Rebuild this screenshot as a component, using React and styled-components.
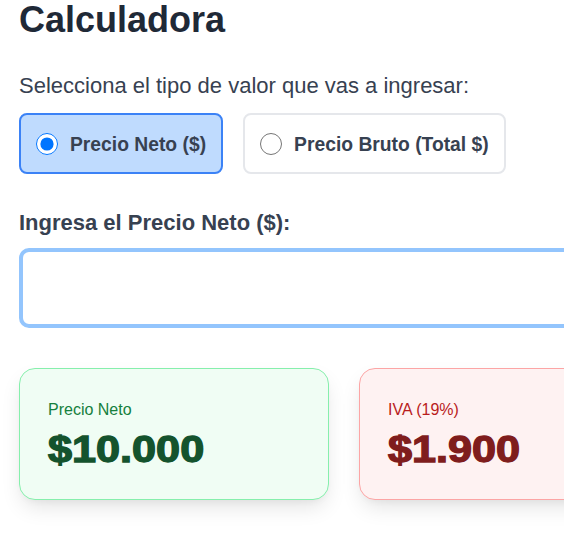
import React, { useState } from "react";
import styled, { createGlobalStyle } from "styled-components";

const Global = createGlobalStyle`
  html { overflow: hidden; }
  html, body { margin: 0; padding: 0; background: #ffffff; }
  body { font-family: "Liberation Sans", Arial, sans-serif; }
  * { box-sizing: border-box; }
`;

const Page = styled.div`
  width: 990px;
  margin-left: 19px;
  padding-bottom: 40px;
  display: flex;
  flex-direction: column;
`;

const Title = styled.h1`
  margin: 0;
  font-size: 36px;
  line-height: 40px;
  font-weight: 700;
  color: #1f2937;
`;

const Prompt = styled.p`
  margin: 32px 0 0;
  font-size: 22px;
  line-height: 28px;
  color: #374151;
`;

const OptionRow = styled.div`
  margin-top: 13px;
  display: flex;
  gap: 20px;
`;

const Option = styled.label`
  display: flex;
  align-items: center;
  gap: 12px;
  height: 61px;
  padding: 0 15px;
  border-radius: 8px;
  border: 2px solid ${(p) => (p.$active ? "#3b82f6" : "#e5e7eb")};
  background: ${(p) => (p.$active ? "#bfdbfe" : "#ffffff")};
  cursor: pointer;
`;

const Radio = styled.input`
  width: 22px;
  height: 22px;
  margin: 0;
`;

const OptionText = styled.span`
  font-size: 19.3px;
  font-weight: 700;
  color: #374151;
  padding-top: 2px;
`;

const FieldLabel = styled.label`
  margin-top: 35px;
  font-size: 22px;
  line-height: 28px;
  font-weight: 700;
  color: #374151;
`;

const Input = styled.input`
  margin-top: 11px;
  width: 100%;
  height: 80px;
  border: 4px solid #93c5fd;
  border-radius: 10px;
  background: #ffffff;
  outline: none;
  padding: 0 16px;
  font-size: 24px;
  font-family: inherit;
`;

const Cards = styled.div`
  margin-top: 40px;
  display: grid;
  grid-template-columns: repeat(3, 310px);
  gap: 30px;
`;

const tones = {
  green: { bg: "#f0fdf4", border: "#86efac", label: "#15803d", value: "#14532d" },
  red: { bg: "#fef2f2", border: "#fca5a5", label: "#b91c1c", value: "#7f1d1d" },
};

const Card = styled.div`
  height: 132px;
  padding: 29px 28px 0;
  border-radius: 16px;
  border: 1px solid ${(p) => tones[p.$tone].border};
  background: ${(p) => tones[p.$tone].bg};
  box-shadow: 0 10px 22px -4px rgba(0, 0, 0, 0.12), 0 4px 8px -4px rgba(0, 0, 0, 0.06);
`;

const CardLabel = styled.div`
  font-size: 16px;
  line-height: 24px;
  color: ${(p) => tones[p.$tone].label};
`;

const CardValue = styled.div`
  margin-top: 8px;
  display: inline-block;
  font-family: "Arial Black", "Liberation Sans", Arial, sans-serif;
  font-size: 36px;
  line-height: 40px;
  font-weight: 900;
  transform: scaleX(1.2);
  transform-origin: left center;
  -webkit-text-stroke: 1.3px ${(p) => tones[p.$tone].value};
  color: ${(p) => tones[p.$tone].value};
`;

export default function App() {
  const [mode, setMode] = useState("neto");
  return (
    <>
      <Global />
      <Page>
        <Title>Calculadora</Title>
        <Prompt>Selecciona el tipo de valor que vas a ingresar:</Prompt>
        <OptionRow>
          <Option $active={mode === "neto"}>
            <Radio type="radio" name="mode" checked={mode === "neto"} onChange={() => setMode("neto")} />
            <OptionText>Precio Neto ($)</OptionText>
          </Option>
          <Option $active={mode === "bruto"}>
            <Radio type="radio" name="mode" checked={mode === "bruto"} onChange={() => setMode("bruto")} />
            <OptionText>Precio Bruto (Total $)</OptionText>
          </Option>
        </OptionRow>
        <FieldLabel htmlFor="valor">Ingresa el Precio Neto ($):</FieldLabel>
        <Input id="valor" type="text" />
        <Cards>
          <Card $tone="green">
            <CardLabel $tone="green">Precio Neto</CardLabel>
            <CardValue $tone="green">$10.000</CardValue>
          </Card>
          <Card $tone="red">
            <CardLabel $tone="red">IVA (19%)</CardLabel>
            <CardValue $tone="red">$1.900</CardValue>
          </Card>
        </Cards>
      </Page>
    </>
  );
}
